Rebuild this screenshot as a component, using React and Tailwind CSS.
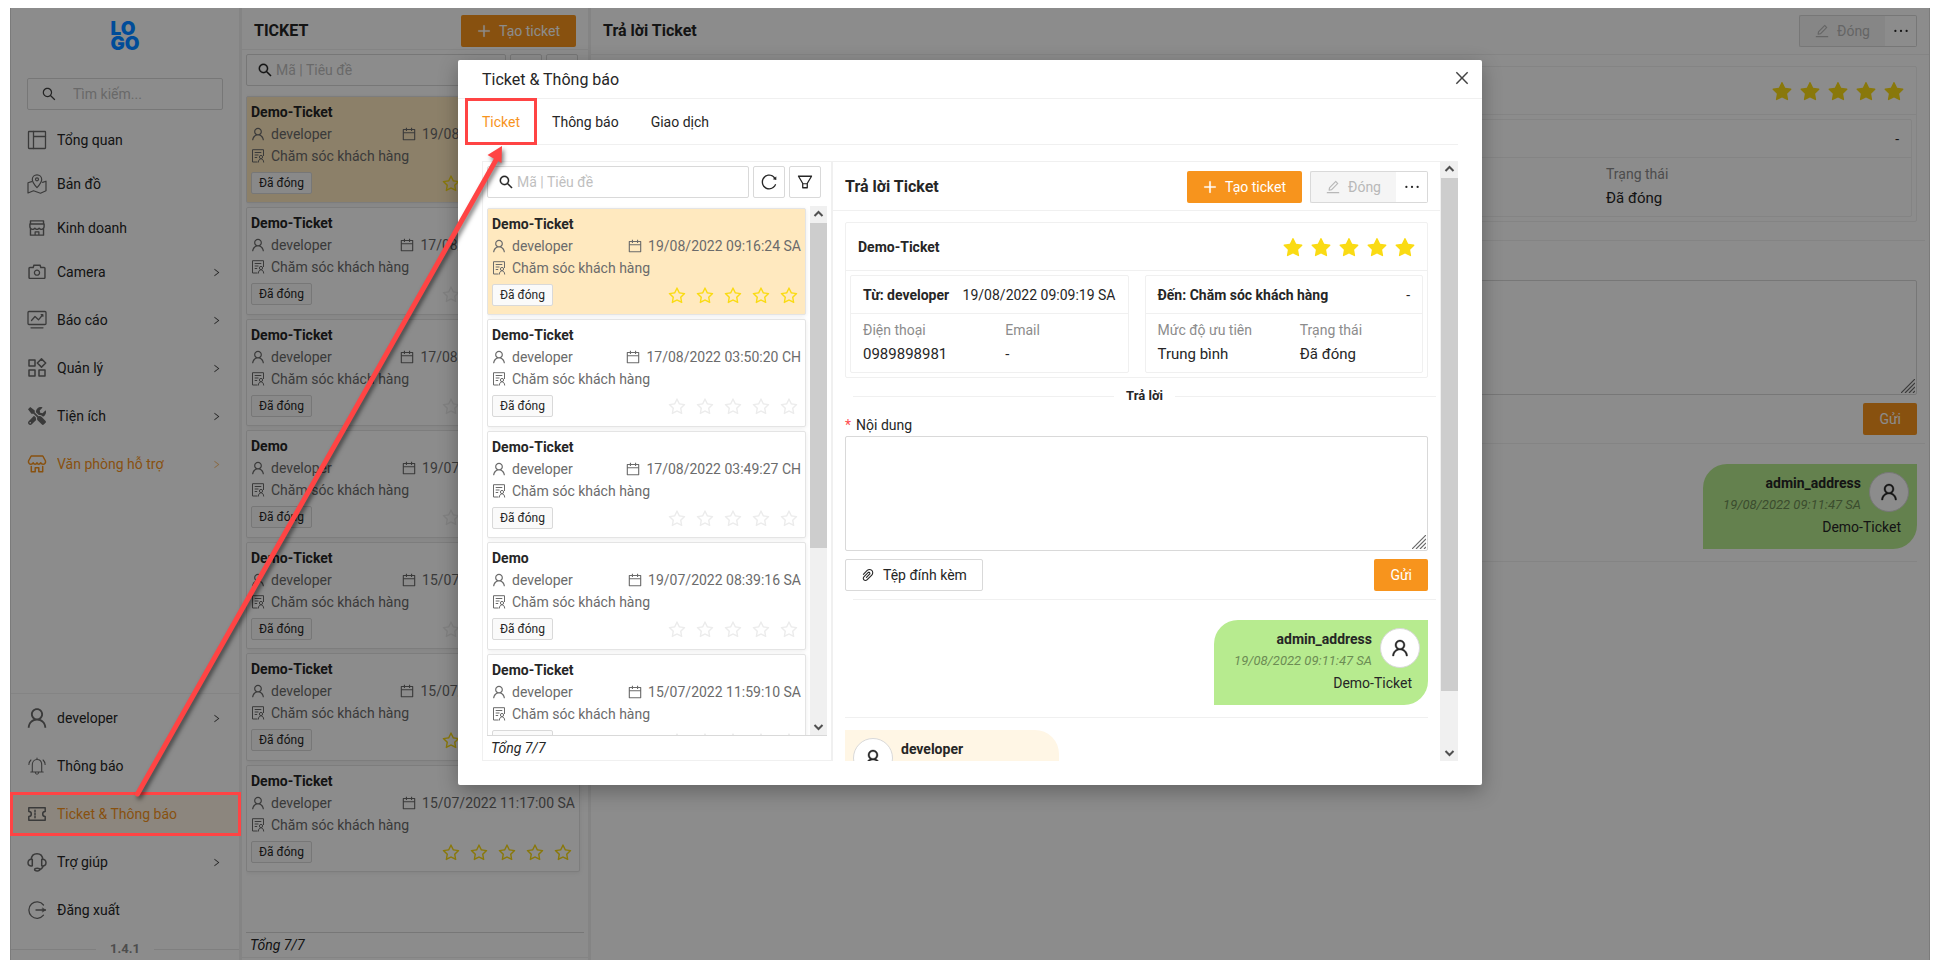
import React from "react";
import {
  AiFillStar,
  AiOutlineCalendar,
  AiOutlineCamera,
  AiOutlineClose,
  AiOutlineEdit,
  AiOutlineEllipsis,
  AiOutlineFilter,
  AiOutlinePaperClip,
  AiOutlinePlus,
  AiOutlineReload,
  AiOutlineRight,
  AiOutlineSearch,
  AiOutlineShop,
  AiOutlineStar,
  AiOutlineUser,
} from "react-icons/ai";
import { FaTools } from "react-icons/fa";

const TIGHT = "64 64 896 896";

function Line({ children, width = 1.3 }) {
  return (
    <svg
      viewBox="0 0 20 20"
      className="size-5"
      fill="none"
      stroke="currentColor"
      strokeWidth={width}
      strokeLinecap="round"
      strokeLinejoin="round"
      aria-hidden="true"
    >
      {children}
    </svg>
  );
}

const LayoutIcon = () => (
  <Line>
    <rect x="1.5" y="1.5" width="17" height="17" rx="0.5" />
    <path d="M6.5 1.5v17M6.5 6.5h12" />
  </Line>
);

const MapIcon = () => (
  <Line width={1.2}>
    <path d="M10 13.6C7 10.4 5.3 8 5.3 5.5a4.7 4.7 0 0 1 9.4 0c0 2.5-1.7 4.9-4.7 8.1z" />
    <circle cx="10" cy="5.3" r="1.5" />
    <path d="M4.6 7.6 1 8.8v10.2l5.5-2.2 7 2.4 5.5-2.4V7.2l-3.4 1.2" />
  </Line>
);

const ReportIcon = () => (
  <Line>
    <rect x="1" y="1.5" width="18" height="13" rx="1" />
    <path d="M4.5 10.5 8 6.5l3.5 3.3L15.5 5M14.2 4.7l1.6-.1.1 1.6M4 17.8h12" />
  </Line>
);

const ManageIcon = () => (
  <Line width={1.5}>
    <rect x="2" y="2" width="6" height="6" />
    <path d="M14.5.9 18.700 5l-4.200 4.100L10.300 5z" />
    <rect x="2" y="12" width="6" height="6" />
    <rect x="12" y="12" width="6" height="6" />
  </Line>
);

const StoreIcon = () => (
  <Line width={1.5}>
    <path d="M4.200 2h11.600l2.700 5c.3 2.200-1 3.300-2.400 3.300-1.300 0-2-.6-2.300-1.600-.5 1-1.200 1.500-2 1.500s-1.500-.5-1.800-1.500c-.4 1-1 1.500-1.900 1.500-.9 0-1.600-.5-1.900-1.500-.4 1-1.200 1.600-2.300 1.600C2.500 10.300 1.200 9 1.500 7z" />
    <path d="M4.300 12.500v5.300h3.900v-4h3.600v4h3.900v-5.300" />
  </Line>
);

const BellIcon = () => (
  <Line width={1.1}>
    <path d="M10 2v1.500M5.300 16V9c0-3.300 2-5.500 4.700-5.500s4.700 2.200 4.700 5.500v7M3.800 16h12.400M8.300 16.500c.2 1.100.8 1.700 1.700 1.700s1.500-.6 1.700-1.700" />
    <path d="M3.900 4C2.700 5.200 2 6.700 1.900 8.500M16.100 4c1.200 1.200 1.900 2.700 2 4.500" />
  </Line>
);

const TicketIcon = () => (
  <Line width={1.5}>
    <path d="M1.800 3.800h16.400v3.700a2.500 2.500 0 0 0 0 5v3.700H1.800v-3.700a2.500 2.500 0 0 0 0-5z" />
    <path d="M8 6.300v1.500M8 9.300v1.500M8 12.300v1.500" />
  </Line>
);

const HeadsetIcon = () => (
  <Line width={1.5}>
    <path d="M4.300 7.500C4.500 4 6.800 1.800 10 1.800s5.500 2.200 5.700 5.700" />
    <path d="M5.300 7.500v6.300C2.900 14.500 1 13.300 1 10.700s1.900-3.800 4.300-3.200zM14.700 7.500v6.300c2.400.7 4.300-.5 4.300-3.100s-1.900-3.800-4.300-3.200z" />
    <path d="M16 14.200c-.4 2-1.700 3-3.300 3.300" />
    <ellipse cx="10.2" cy="17.6" rx="2.6" ry="1.3" />
  </Line>
);

const LogoutIcon = () => (
  <Line>
    <path d="M16.500 5A8.200 8.200 0 1 0 16.500 15.200M9 10h9.500" />
    <path d="M15.600 8l3 2-3 2z" fill="currentColor" strokeWidth="0.5" />
  </Line>
);

function DepartmentIcon() {
  return (
    <svg
      viewBox="0 0 14 14"
      className="mr-1.5 size-[14px]"
      fill="none"
      stroke="currentColor"
      strokeWidth="1"
      aria-hidden="true"
    >
      <path d="M6.500 13H1.500V.700h11v6.300M3.700 3.500h6.600M3.700 6h3.800M3.700 8.500h2.500" />
      <circle cx="10" cy="8" r="1.6" />
      <path d="M7.300 13.500c.1-2.300 1.200-3.700 2.700-3.700s2.600 1.400 2.700 3.700" />
    </svg>
  );
}

const TOP_ITEMS = [
  { label: "Tổng quan", icon: <LayoutIcon /> },
  { label: "Bản đồ", icon: <MapIcon /> },
  { label: "Kinh doanh", icon: <AiOutlineShop className="size-5" /> },
  { label: "Camera", icon: <AiOutlineCamera className="size-[18px]" viewBox={TIGHT} />, sub: true },
  { label: "Báo cáo", icon: <ReportIcon />, sub: true },
  { label: "Quản lý", icon: <ManageIcon />, sub: true },
  { label: "Tiện ích", icon: <FaTools className="size-[18px]" />, sub: true },
  { label: "Văn phòng hỗ trợ", icon: <StoreIcon />, sub: true, open: true },
];

const BOTTOM_ITEMS = [
  { label: "developer", icon: <AiOutlineUser className="size-[22px] shrink-0" viewBox={TIGHT} />, sub: true },
  { label: "Thông báo", icon: <BellIcon />, gap: true },
  { label: "Ticket & Thông báo", icon: <TicketIcon />, active: true, gap: true },
  { label: "Trợ giúp", icon: <HeadsetIcon />, sub: true },
  { label: "Đăng xuất", icon: <LogoutIcon />, gap: true },
];

const TICKETS = [
  { title: "Demo-Ticket", date: "19/08/2022 09:16:24 SA", rated: true, selected: true },
  { title: "Demo-Ticket", date: "17/08/2022 03:50:20 CH" },
  { title: "Demo-Ticket", date: "17/08/2022 03:49:27 CH" },
  { title: "Demo", date: "19/07/2022 08:39:16 SA" },
  { title: "Demo-Ticket", date: "15/07/2022 11:59:10 SA" },
  { title: "Demo-Ticket", date: "15/07/2022 11:20:41 CH", rated: true },
  { title: "Demo-Ticket", date: "15/07/2022 11:17:00 SA", rated: true },
];

function NavItem({ item }) {
  const tone = item.active || item.open ? "text-[#f7941d]" : "text-[#262626]";
  const iconTone = item.open ? "text-[#f7941d]" : "text-[#6b6b6b]";
  return (
    <li className={item.sub || item.gap ? "mb-2" : "mb-1"}>
      <a
        href="#"
        className={`relative flex h-10 items-center pr-[18px] pl-4 ${tone} ${item.active ? "bg-[#fff5e6]" : ""}`}
      >
        <span className={`mr-[10px] flex w-5 shrink-0 justify-center ${iconTone}`}>{item.icon}</span>
        <span className="flex-1 truncate">{item.label}</span>
        {item.sub && (
          <AiOutlineRight
            viewBox={TIGHT}
            className={`size-[9px] ${item.open ? "opacity-60" : "text-[#434343]"}`}
          />
        )}
        {item.active && (
          <span className="absolute -inset-y-0.5 -right-0.5 -left-px z-30 border-[3px] border-[#ff4444]" />
        )}
      </a>
    </li>
  );
}

function Sidebar() {
  return (
    <aside className="flex w-[229px] shrink-0 flex-col border-l border-[#e0e0e0] bg-white">
      <div className="flex h-[70px] shrink-0 justify-center pt-[13px]">
        <div className="relative z-20 font-['Inter',sans-serif] text-[19px] leading-[15px] font-black text-[#004c99]">
          LO
          <br />
          GO
        </div>
      </div>
      <label className="mx-4 mb-2.5 flex h-8 shrink-0 items-center rounded-xs border border-[#d9d9d9] px-[14px] text-[#434343]">
        <AiOutlineSearch viewBox={TIGHT} className="size-[14px] shrink-0" />
        <input
          aria-label="Tìm kiếm"
          placeholder="Tìm kiếm..."
          className="ml-[17px] w-full min-w-0 bg-transparent outline-none placeholder:text-[#bfbfbf]"
        />
      </label>
      <ul className="flex-1">
        {TOP_ITEMS.map((item) => (
          <NavItem key={item.label} item={item} />
        ))}
      </ul>
      <ul className="border-t border-[#f0f0f0] pt-1">
        {BOTTOM_ITEMS.map((item) => (
          <NavItem key={item.label} item={item} />
        ))}
      </ul>
      <div className="flex h-[22px] items-center gap-3.5 text-[13px] font-bold text-[#8c8c8c]">
        <span className="h-px flex-1 bg-[#e8e8e8]" />
        1.4.1
        <span className="h-px flex-1 bg-[#e8e8e8]" />
      </div>
    </aside>
  );
}

function Stars({ filled, rated }) {
  const Icon = filled ? AiFillStar : AiOutlineStar;
  return (
    <span className={`flex gap-2 pt-0.5 ${rated ? "text-[#fadb14]" : "text-[#ececec]"}`}>
      {[0, 1, 2, 3, 4].map((n) => (
        <Icon key={n} viewBox={filled ? TIGHT : "0 0 1024 1024"} className="size-5" />
      ))}
    </span>
  );
}

function ScrollTrack({ thumb }) {
  return (
    <div className="flex w-[17px] shrink-0 flex-col bg-[#f0f0f0] text-[#505050]">
      <svg viewBox="0 0 17 17" className="size-[17px]" fill="none" stroke="currentColor" strokeWidth="2" aria-hidden="true">
        <path d="M4.500 10l4-4 4 4" />
      </svg>
      <div className={`bg-[#cdcdcd] ${thumb}`} />
      <span className="flex-1" />
      <svg viewBox="0 0 17 17" className="size-[17px]" fill="none" stroke="currentColor" strokeWidth="2" aria-hidden="true">
        <path d="M4.500 7l4 4 4-4" />
      </svg>
    </div>
  );
}

function TicketCard({ ticket }) {
  return (
    <li
      className={`rounded-xs border border-[#e4e4e4] p-1 leading-[22px] shadow-[0_1px_4px_rgba(0,0,0,0.08)] ${
        ticket.selected ? "bg-[#ffe9bf]" : "bg-white"
      }`}
    >
      <div className="font-bold text-[#262626]">{ticket.title}</div>
      <div className="flex items-center text-[#6b6b6b]">
        <AiOutlineUser viewBox={TIGHT} className="mr-1.5 size-[14px]" />
        <span className="flex-1">developer</span>
        <AiOutlineCalendar viewBox={TIGHT} className="mr-1.5 size-[14px]" />
        {ticket.date}
      </div>
      <div className="flex items-center text-[#6b6b6b]">
        <DepartmentIcon />
        Chăm sóc khách hàng
      </div>
      <div className="mt-[5px] flex items-start justify-between pr-0.5">
        <span className="rounded-xs border border-[#d9d9d9] bg-[#fafafa] px-[7px] text-xs leading-5 text-[#262626]">
          Đã đóng
        </span>
        <Stars rated={ticket.rated} />
      </div>
    </li>
  );
}

function SquareButton({ label, children }) {
  return (
    <button
      aria-label={label}
      className="flex size-8 shrink-0 items-center justify-center rounded-xs border border-[#d9d9d9] bg-white text-[#262626]"
    >
      {children}
    </button>
  );
}

function TicketList({ scroll }) {
  return (
    <div className="flex min-h-0 flex-1 flex-col px-1 pt-1">
      <div className="flex shrink-0 gap-1 pr-1.5">
        <label className="flex h-8 min-w-0 flex-1 items-center rounded-xs border border-[#d9d9d9] px-[11px] text-[#262626]">
          <AiOutlineSearch viewBox={TIGHT} className="size-[14px] shrink-0" stroke="currentColor" strokeWidth="20" />
          <input
            aria-label="Mã | Tiêu đề"
            placeholder="Mã | Tiêu đề"
            className="ml-1 w-full min-w-0 bg-transparent outline-none placeholder:text-[#bfbfbf]"
          />
        </label>
        <SquareButton label="Tải lại">
          <AiOutlineReload viewBox={TIGHT} className="size-4" />
        </SquareButton>
        <SquareButton label="Lọc">
          <AiOutlineFilter viewBox={TIGHT} className="size-4" />
        </SquareButton>
      </div>
      <div className="mt-2 flex min-h-0 flex-1 overflow-hidden">
        <ul className="mt-0.5 mr-1 grid h-[776px] flex-1 grid-rows-7 gap-1">
          {TICKETS.map((ticket, i) => (
            <TicketCard key={i} ticket={ticket} />
          ))}
        </ul>
        {scroll && <ScrollTrack thumb="h-[325px]" />}
      </div>
      <div className="h-[25px] shrink-0 border-t border-[#d9d9d9] pl-1 leading-6 text-[#262626] italic">Tổng 7/7</div>
    </div>
  );
}

function CreateButton() {
  return (
    <button className="flex h-8 items-center gap-2 rounded-xs bg-[#f7941d] px-4 text-white">
      <AiOutlinePlus viewBox={TIGHT} className="size-[14px]" stroke="currentColor" strokeWidth="30" />
      Tạo ticket
    </button>
  );
}

function InfoCard({ name, aside, fields }) {
  return (
    <div className="rounded-xs border border-[#f0f0f0]">
      <div className="flex h-[38px] items-center justify-between border-b border-[#f0f0f0] px-3 whitespace-nowrap">
        <span className="font-bold">{name}</span>
        <span>{aside}</span>
      </div>
      <dl className="grid grid-cols-2 gap-x-8 px-3 pt-[5px] pb-[5px] whitespace-nowrap">
        {fields.map(([label, value]) => (
          <div key={label}>
            <dt className="leading-[22px] text-[#8c8c8c]">{label}</dt>
            <dd className="text-[15px] leading-[26px]">{value}</dd>
          </div>
        ))}
      </dl>
    </div>
  );
}

function Avatar() {
  return (
    <span className="flex size-10 shrink-0 items-center justify-center rounded-full border border-[#d9d9d9] bg-white text-[#262626]">
      <AiOutlineUser viewBox={TIGHT} className="size-[18px]" stroke="currentColor" strokeWidth="20" />
    </span>
  );
}

function ReplyPanel({ id, headerClass, create }) {
  return (
    <section className="flex min-w-0 flex-1 flex-col overflow-hidden bg-white text-[#262626]">
      <header
        className={`flex shrink-0 items-center gap-2 border-b border-[#f0f0f0] px-3 ${headerClass}`}
      >
        <h2 className="flex-1 text-base font-bold">Trả lời Ticket</h2>
        {create && <CreateButton />}
        <div className="flex">
          <button
            disabled
            className="flex h-8 items-center gap-2 rounded-l-xs border border-r-0 border-[#d9d9d9] bg-[#f5f5f5] px-[15px] text-[#b8b8b8]"
          >
            <AiOutlineEdit viewBox={TIGHT} className="size-[14px]" />
            Đóng
          </button>
          <button
            aria-label="Thêm"
            className="flex h-8 w-8 items-center justify-center rounded-r-xs border border-l-0 border-[#d9d9d9] bg-white"
          >
            <AiOutlineEllipsis viewBox={TIGHT} className="size-[18px]" />
          </button>
        </div>
      </header>
      <div className="px-3 pt-[11px]">
        <div className="rounded-xs border border-[#f0f0f0]">
          <div className="flex h-12 items-center justify-between border-b border-[#f0f0f0] px-3">
            <span className="font-bold">Demo-Ticket</span>
            <Stars filled rated />
          </div>
          <div className="grid grid-cols-2 gap-4 p-1">
            <InfoCard
              name="Từ: developer"
              aside="19/08/2022 09:09:19 SA"
              fields={[
                ["Điện thoại", "0989898981"],
                ["Email", "-"],
              ]}
            />
            <InfoCard
              name="Đến: Chăm sóc khách hàng"
              aside="-"
              fields={[
                ["Mức độ ưu tiên", "Trung bình"],
                ["Trạng thái", "Đã đóng"],
              ]}
            />
          </div>
        </div>
        <div className="mt-[7px] -mr-2 ml-2 flex h-[22px] items-center gap-3 text-[13px] font-bold">
          <span className="h-px flex-1 bg-[#f0f0f0]" />
          Trả lời
          <span className="h-px flex-1 bg-[#f0f0f0]" />
        </div>
        <label htmlFor={id} className="mt-[7px] flex h-[22px] items-center gap-[5px]">
          <span className="text-[#ff4d4f]">*</span>
          Nội dung
        </label>
        <div className="relative h-[115px]">
          <textarea id={id} className="block size-full resize-none rounded-xs border border-[#d9d9d9] outline-none" />
          <svg
            viewBox="0 0 14 14"
            className="absolute right-0.5 bottom-0.5 size-[14px]"
            stroke="#6b6b6b"
            strokeWidth="1.2"
            aria-hidden="true"
          >
            <path d="M0 14L14 0M4 14L14 4M8 14l6-6M12 14l2-2" />
          </svg>
        </div>
        <div className="mt-2 flex justify-between">
          <button className="flex h-8 items-center gap-2 rounded-xs border border-[#d9d9d9] bg-white px-[15px]">
            <AiOutlinePaperClip viewBox={TIGHT} className="size-[14px]" />
            Tệp đính kèm
          </button>
          <button className="h-8 rounded-xs bg-[#f7941d] px-4 text-white">Gửi</button>
        </div>
        <hr className="mt-2 -mr-2 ml-2 border-[#f0f0f0]" />
        <div className="mt-5 ml-auto h-[85px] w-[214px] rounded-tl-3xl rounded-br-3xl bg-[#b7eb8f] p-2 text-right">
          <div className="flex justify-end gap-2">
            <div>
              <div className="leading-[22px] font-bold">admin_address</div>
              <div className="text-[13px] leading-[22px] text-[#6c8c54] italic">19/08/2022 09:11:47 SA</div>
            </div>
            <Avatar />
          </div>
          <div className="pr-2 leading-[22px]">Demo-Ticket</div>
        </div>
        <hr className="mt-3 border-[#f0f0f0]" />
        <div className="mt-3 flex h-[85px] w-[214px] gap-2 rounded-tr-3xl rounded-bl-3xl bg-[#fff6e5] p-2">
          <Avatar />
          <div className="leading-[22px] font-bold">developer</div>
        </div>
      </div>
    </section>
  );
}

function TicketModal() {
  return (
    <div
      role="dialog"
      aria-label="Ticket & Thông báo"
      className="w-[1024px] max-w-full self-start rounded-xs bg-white pb-6 text-[#262626] shadow-[0_6px_20px_rgba(0,0,0,0.3)]"
    >
      <header className="flex h-[39px] items-start justify-between border-b border-[#f0f0f0] pr-3 pl-6 text-base">
        <h1 className="pt-2">Ticket &amp; Thông báo</h1>
        <button aria-label="Đóng" className="pt-2.5 text-[#434343]">
          <AiOutlineClose viewBox={TIGHT} className="size-4" />
        </button>
      </header>
      <div className="px-6">
        <nav className="flex h-[46px] gap-8 border-b border-[#f0f0f0]">
          <button className="relative text-[#f7941d]">
            Ticket
            <span className="absolute -inset-x-[17px] -inset-y-px border-[3px] border-[#ff4444]" />
          </button>
          <button>Thông báo</button>
          <button>Giao dịch</button>
        </nav>
        <div className="mt-4 flex h-[600px]">
          <div className="flex w-[350px] shrink-0 flex-col border border-[#f0f0f0]">
            <TicketList scroll />
          </div>
          <div className="flex min-w-0 flex-1 border-x border-t border-[#f0f0f0]">
            <ReplyPanel id="modal-content" headerClass="h-[49px] pt-px" create />
          </div>
          <ScrollTrack thumb="h-[513px]" />
        </div>
      </div>
    </div>
  );
}

export default function App() {
  return (
    <div className="relative h-screen bg-white pt-2 pr-2 pb-[7px] pl-[10px] font-['Roboto',sans-serif] text-sm">
      <div className="relative flex h-full gap-[3px] overflow-hidden bg-[#f0f0f0]">
        <Sidebar />
        <section className="flex w-[346px] shrink-0 flex-col bg-white">
          <header className="flex h-[42px] shrink-0 items-center justify-between border-b border-[#f0f0f0] px-3 pt-1 text-[#262626]">
            <h2 className="text-base font-bold">TICKET</h2>
            <CreateButton />
          </header>
          <TicketList />
          <div className="h-[3px] shrink-0 border-t border-[#f0f0f0]" />
        </section>
        <div className="flex min-w-0 flex-1 border-r border-[#e0e0e0]">
          <ReplyPanel id="page-content" headerClass="h-[47px]" />
        </div>
        <div className="absolute inset-0 z-10 flex justify-center bg-black/45 pt-[52px]">
          <TicketModal />
        </div>
      </div>
      <svg
        viewBox="0 0 400 670"
        className="pointer-events-none absolute top-[140px] left-[120px] z-40 h-[670px] w-[400px] drop-shadow-[2px_3px_2px_rgba(0,0,0,0.5)]"
        aria-hidden="true"
      >
        <path d="M17.500 654L376 20" stroke="#ff4444" strokeWidth="5" strokeLinecap="round" />
        <path d="M382 6L367.500 15l14 8z" fill="#ff4444" />
      </svg>
    </div>
  );
}
